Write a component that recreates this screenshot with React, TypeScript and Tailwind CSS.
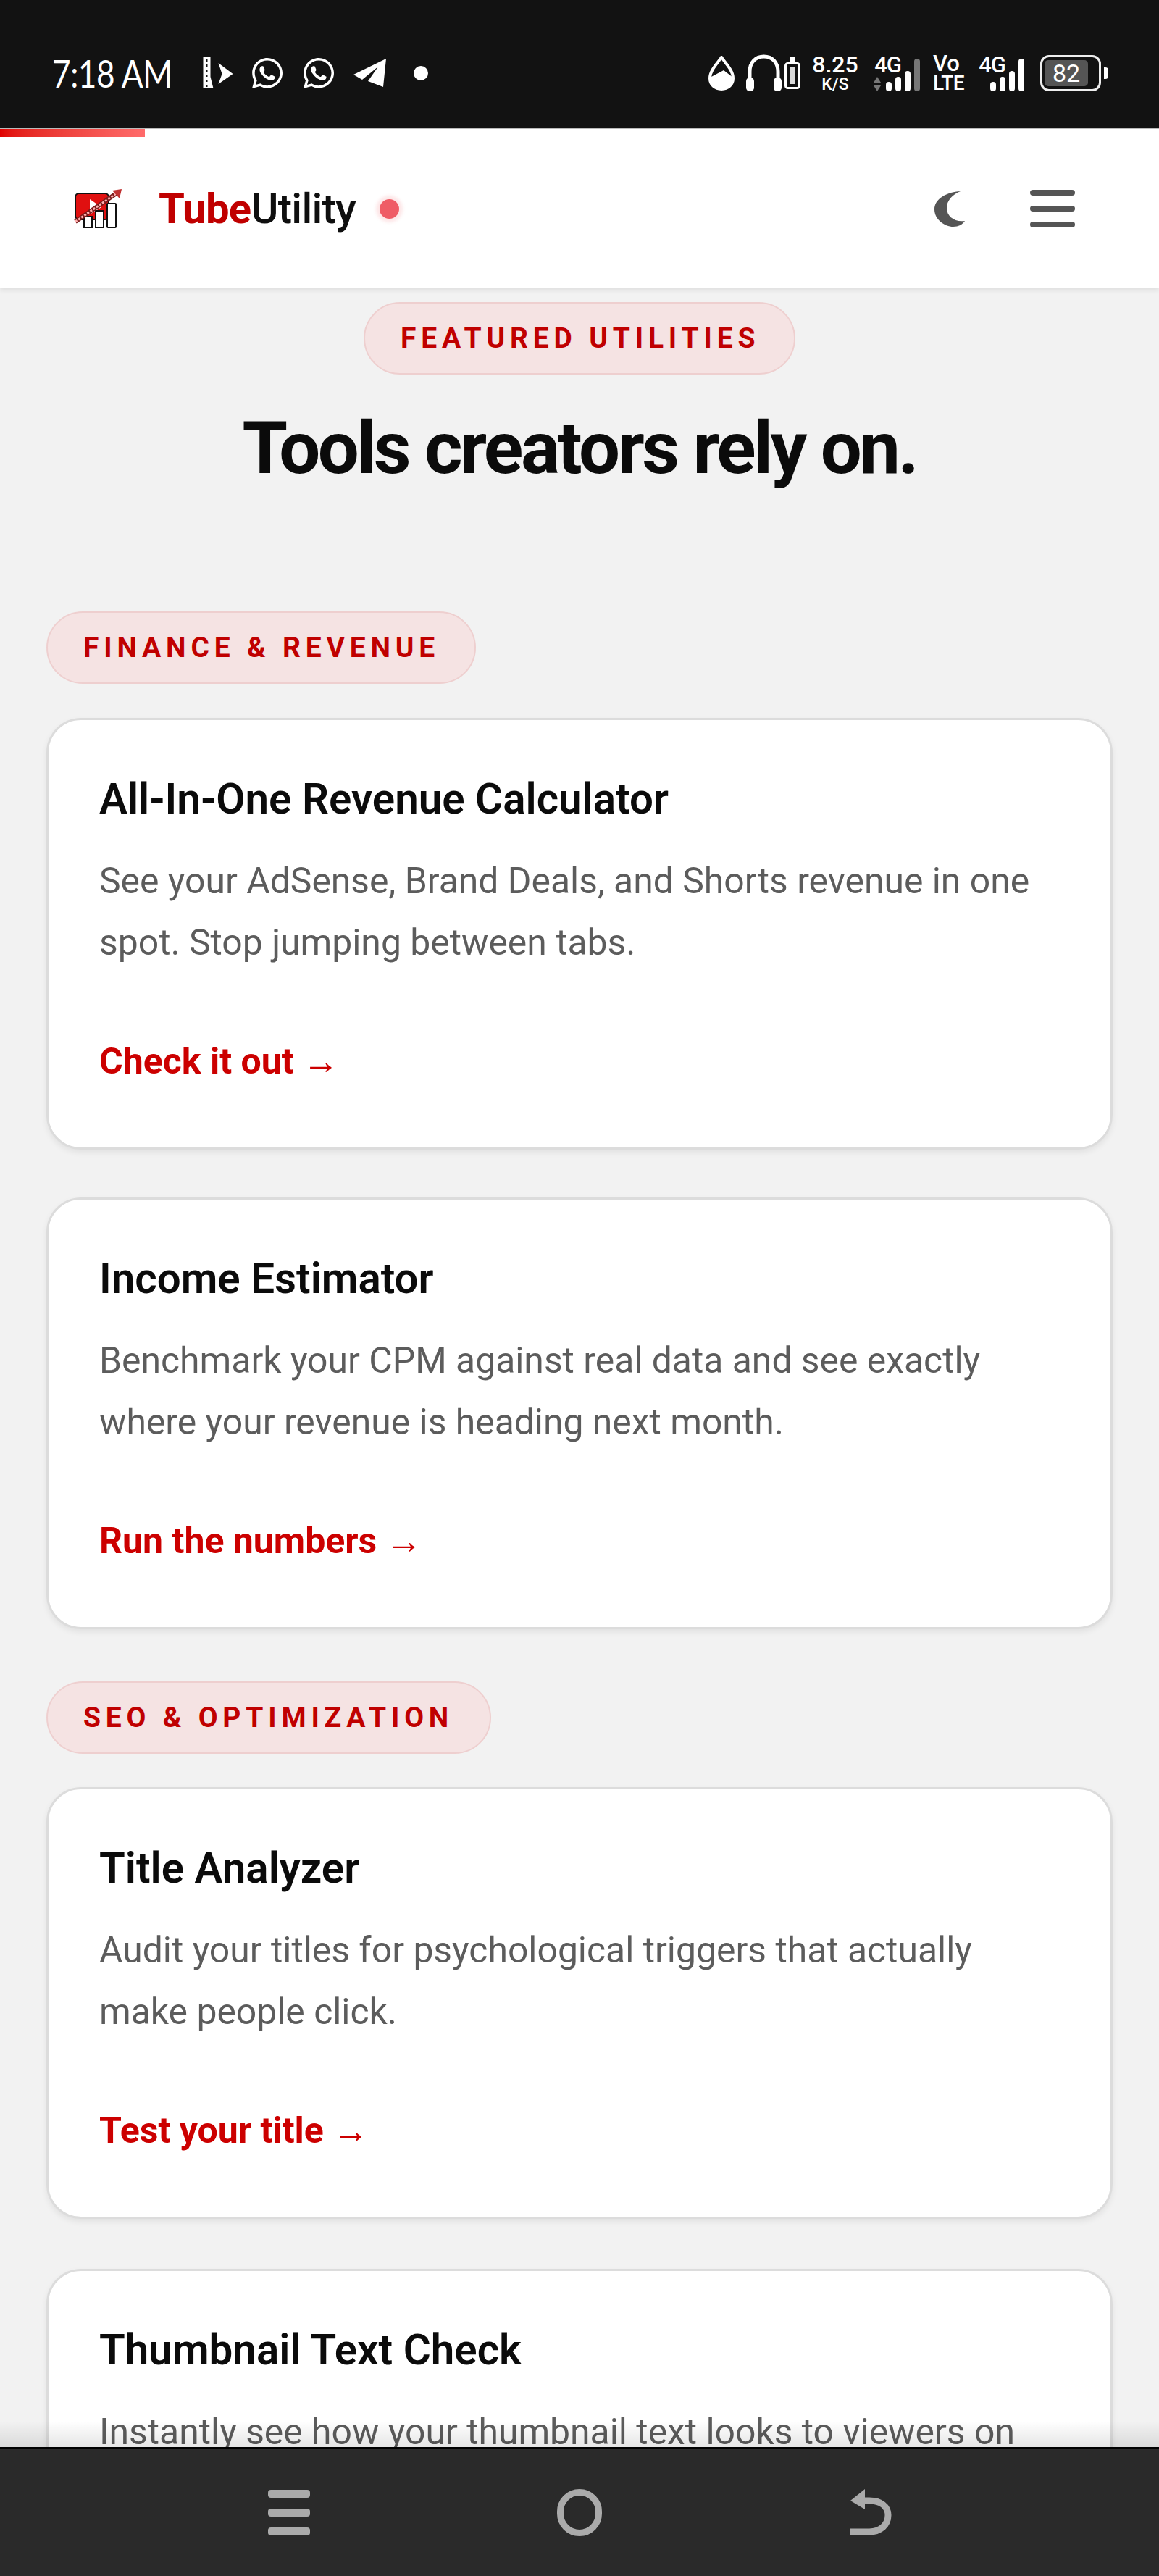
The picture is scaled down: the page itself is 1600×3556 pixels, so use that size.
import { FaWhatsapp } from "react-icons/fa";

type Card = {
  title: string;
  desc: string[];
  link?: string;
};

const financeCards: Card[] = [
  {
    title: "All-In-One Revenue Calculator",
    desc: ["See your AdSense, Brand Deals, and Shorts revenue in one", "spot. Stop jumping between tabs."],
    link: "Check it out",
  },
  {
    title: "Income Estimator",
    desc: ["Benchmark your CPM against real data and see exactly", "where your revenue is heading next month."],
    link: "Run the numbers",
  },
];

const seoCards: Card[] = [
  {
    title: "Title Analyzer",
    desc: ["Audit your titles for psychological triggers that actually", "make people click."],
    link: "Test your title",
  },
  {
    title: "Thumbnail Text Check",
    desc: ["Instantly see how your thumbnail text looks to viewers on"],
  },
];

function Pill({ label, className }: { label: string; className: string }) {
  return (
    <div
      className={`flex h-[100px] items-center rounded-full border-2 border-[#eecfcf] bg-[#f5e3e3] pl-[49px] text-[39px] font-bold tracking-[6.8px] text-[#c00000] ${className}`}
    >
      {label}
    </div>
  );
}

function ToolCard({ card }: { card: Card }) {
  return (
    <div className="h-[596px] shrink-0 rounded-[48px] border-[3px] border-[#dcdcdc] bg-white pt-[73px] pl-[70px] shadow-[0_4px_8px_rgba(0,0,0,0.07)]">
      <h3 className="text-[58.300px] leading-[72px] font-semibold text-[#0b0b0b]">{card.title}</h3>
      <div className="mt-[35px] text-[49.850px] leading-[85px] text-[#5c5c5c]">
        {card.desc.map((line) => (
          <p key={line}>{line}</p>
        ))}
      </div>
      {card.link && <div className="mt-[91px] text-[50px] leading-[60px] font-bold text-[#cc0000]">{card.link} →</div>}
    </div>
  );
}

function Signal({ arrows, lastBar }: { arrows?: boolean; lastBar: string }) {
  return (
    <div className="flex h-[50px] items-end gap-[5px]">
      <div className="flex w-[39px] flex-col items-end">
        <span className="h-[27px] w-[39px] text-right text-[31px] leading-[27px] font-medium tracking-[-1px] text-white">4G</span>
        <div className="flex h-[23px] items-end gap-[5px]">
          {arrows && (
            <svg width="12" height="20" viewBox="0 0 12 20" className="mr-[1px]">
              <path d="M6 0L11 8H1ZM6 20L1 12H11Z" fill="#777" />
            </svg>
          )}
          <div className="h-[13px] w-[8px] rounded-full bg-white" />
          <div className="h-[20px] w-[8px] rounded-full bg-white" />
        </div>
      </div>
      <div className="h-[28px] w-[8px] rounded-full bg-white" />
      <div className={`h-[45px] w-[8px] rounded-full ${lastBar}`} />
    </div>
  );
}

function StatusBar() {
  return (
    <div className="flex h-[177px] shrink-0 items-center justify-between bg-[#121212] pt-[24px] pr-[70px] pl-[72px] text-white">
      <div className="flex items-center">
        <span className="w-[170px] origin-left scale-x-[0.85] font-['Lato',sans-serif] text-[52px] leading-none tracking-[-0.5px] whitespace-nowrap">7:18 AM</span>
        <svg width="43" height="46" viewBox="0 0 42 46" className="ml-[37px]">
          <path d="M1 1H11V28L15 44H1Z" fill="#fff" />
          <path d="M6 4V42" stroke="#121212" strokeWidth="2" strokeDasharray="3 4" />
          <path d="M22 9L42 24L22 38L27 24Z" fill="#fff" />
        </svg>
        <FaWhatsapp className="ml-[23px] size-[48px]" />
        <FaWhatsapp className="ml-[23px] size-[48px]" />
        <svg width="45" height="39" viewBox="0 0 45 39" className="ml-[24px]">
          <path d="M45 0L0 22L12 29L34 11L20 31L41 39Z" fill="#fff" />
        </svg>
        <div className="ml-[38px] size-[20px] rounded-full bg-white" />
      </div>

      <div className="flex items-center">
        <svg width="36" height="48" viewBox="0 0 36 48">
          <path d="M18 2C12 11 2 20 2 31C2 40 9 46 18 46C27 46 34 40 34 31C34 20 24 11 18 2Z" fill="none" stroke="#fff" strokeWidth="4" />
          <path d="M2 30L21 20L34 30C36 40 27 47 18 47C9 47 1 40 2 30Z" fill="#fff" />
        </svg>
        <svg width="49" height="51" viewBox="0 0 49 51" className="ml-[16px]">
          <path d="M5 36V24C5 11 13 3 24.500 3C36 3 44 11 44 24V36" fill="none" stroke="#fff" strokeWidth="5" />
          <rect x="0" y="32" width="11" height="19" rx="5" fill="#fff" />
          <rect x="38" y="32" width="11" height="19" rx="5" fill="#fff" />
        </svg>
        <svg width="22" height="44" viewBox="0 0 22 44" className="ml-[4px]">
          <rect x="7" y="0" width="8" height="6" rx="1" fill="#fff" />
          <rect x="1.500" y="8.500" width="19" height="34" rx="3" fill="none" stroke="#fff" strokeWidth="3" />
          <rect x="7" y="14" width="8" height="23" fill="#fff" opacity="0.85" />
        </svg>
        <div className="ml-[17px] flex w-[62px] flex-col items-center font-medium">
          <span className="text-[32px] leading-[32px]">8.25</span>
          <span className="text-[23px] leading-[24px]">K/S</span>
        </div>
        <div className="ml-[21px]">
          <Signal arrows lastBar="bg-[#777]" />
        </div>
        <div className="ml-[18px] flex w-[45px] flex-col font-medium">
          <span className="text-[31px] leading-[29px]">Vo</span>
          <span className="text-[28px] leading-[26px] tracking-[-0.5px]">LTE</span>
        </div>
        <div className="ml-[16px]">
          <Signal lastBar="bg-white" />
        </div>
        <div className="ml-[22px] flex items-center gap-[4px]">
          <div className="flex h-[50px] w-[84px] items-center rounded-[12px] border-[3px] border-[#eee] p-[3px]">
            <div className="flex h-[36px] w-[60px] items-center justify-center rounded-[5px] bg-[#555] text-[34px] leading-none">82</div>
          </div>
          <div className="h-[16px] w-[6px] rounded-r-sm bg-white" />
        </div>
      </div>
    </div>
  );
}

function Logo() {
  return (
    <svg width="66" height="54" viewBox="0 0 66 54">
      <rect x="2" y="6" width="46" height="36" rx="5" fill="#e01010" stroke="#111" strokeWidth="2" />
      <path d="M22 14L38 25L22 35Z" fill="#fff" />
      <g stroke="#111" strokeWidth="2" fill="#fff">
        <rect x="14" y="38" width="11" height="15" />
        <rect x="30" y="30" width="11" height="23" />
        <rect x="46" y="20" width="12" height="33" rx="1" />
      </g>
      <path d="M2 45L60 5" stroke="#7a1a1a" strokeWidth="6" />
      <path d="M2 45L60 5" stroke="#ffb0b0" strokeWidth="3" strokeDasharray="3 2" />
      <path d="M66 0L53 2L63 13Z" fill="#c03030" />
    </svg>
  );
}

function Header() {
  return (
    <div className="relative z-10 flex h-[221px] shrink-0 items-center justify-between border-t border-[#bbb] bg-white pr-[116px] pl-[102px] shadow-[0_3px_6px_rgba(0,0,0,0.08)]">
      <div className="absolute top-0 left-0 h-[11px] w-[200px] bg-gradient-to-r from-[#e00000] to-[#ff6b6b]" />
      <div className="flex items-center">
        <Logo />
        <div className="ml-[51px] text-[58px] leading-none font-bold tracking-[-0.7px] text-[#0f0f0f]">
          <span className="text-[#c00000]">Tube</span>
          <span className="font-medium">Utility</span>
        </div>
        <div className="ml-[33px] size-[27px] rounded-full bg-[#ef5c66] shadow-[0_0_4px_5px_rgba(239,92,102,0.15)]" />
      </div>
      <div className="flex items-center gap-[90px]">
        <svg width="42" height="50" viewBox="0 0 42 50">
          <path d="M36 1C16 2 0 12 0 26C0 40 14 50 26 50C33 50 39 47 42 42C28 44 17 36 17 24C17 14 25 5 36 1Z" fill="#555" />
        </svg>
        <div className="flex w-[62px] flex-col gap-[14px]">
          <div className="h-[8px] rounded-full bg-[#555]" />
          <div className="h-[8px] rounded-full bg-[#555]" />
          <div className="h-[8px] rounded-full bg-[#555]" />
        </div>
      </div>
    </div>
  );
}

function BottomNav() {
  return (
    <div className="relative z-10 flex h-[178px] shrink-0 items-center justify-center gap-[341px] border-t-[3px] border-black bg-[#2a2a2a]">
      <div className="flex w-[58px] flex-col gap-[15px]">
        <div className="h-[11px] rounded-sm bg-[#aaa]" />
        <div className="h-[11px] rounded-sm bg-[#aaa]" />
        <div className="h-[11px] rounded-sm bg-[#aaa]" />
      </div>
      <div className="h-[65px] w-[62px] rounded-full border-[9px] border-[#aaa]" />
      <svg width="59" height="66" viewBox="0 0 59 66">
        <path d="M2 59H28C44 59 54 49 54 36C54 24 44 16 28 16H8" fill="none" stroke="#aaa" strokeWidth="9" />
        <path d="M22 0L2 16L22 28Z" fill="#aaa" />
      </svg>
    </div>
  );
}

export default function App() {
  return (
    <div className="flex h-screen w-full flex-col overflow-hidden bg-[#f2f2f2] font-['Roboto',sans-serif]">
      <StatusBar />
      <Header />
      <main className="relative flex-1 overflow-hidden px-[64px]">
        <div className="flex flex-col items-center">
          <Pill label="FEATURED UTILITIES" className="mt-[19px] w-[596px]" />
          <h2 className="mt-[49px] text-[101px] leading-[106px] font-bold tracking-[-3.4px] text-[#0b0b0b]">Tools creators rely on.</h2>
        </div>
        <Pill label="FINANCE & REVENUE" className="mt-[172px] w-[593px]" />
        <div className="mt-[47px] flex flex-col gap-[66px]">
          {financeCards.map((card) => (
            <ToolCard key={card.title} card={card} />
          ))}
        </div>
        <Pill label="SEO & OPTIMIZATION" className="mt-[72px] w-[614px]" />
        <div className="mt-[46px] flex flex-col gap-[69px]">
          {seoCards.map((card) => (
            <ToolCard key={card.title} card={card} />
          ))}
        </div>
        <div className="absolute right-0 bottom-0 left-0 h-[36px] bg-gradient-to-b from-transparent to-black/10" />
      </main>
      <BottomNav />
    </div>
  );
}
